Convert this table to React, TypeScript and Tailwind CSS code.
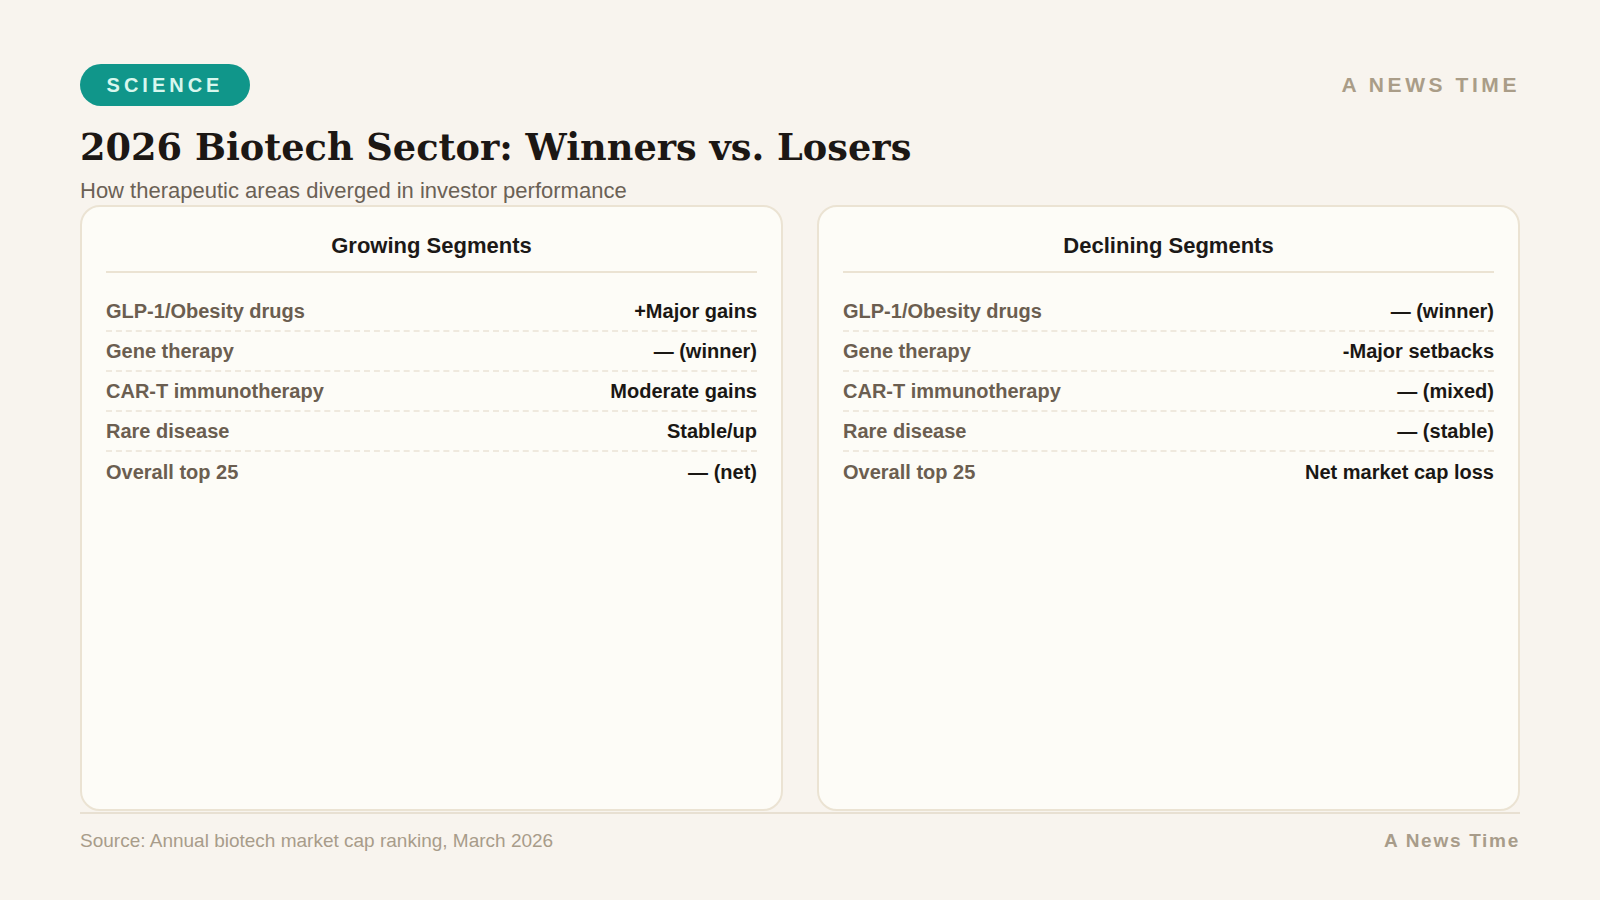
const growing: [string, string][] = [
  ["GLP-1/Obesity drugs", "+Major gains"],
  ["Gene therapy", "— (winner)"],
  ["CAR-T immunotherapy", "Moderate gains"],
  ["Rare disease", "Stable/up"],
  ["Overall top 25", "— (net)"],
];

const declining: [string, string][] = [
  ["GLP-1/Obesity drugs", "— (winner)"],
  ["Gene therapy", "-Major setbacks"],
  ["CAR-T immunotherapy", "— (mixed)"],
  ["Rare disease", "— (stable)"],
  ["Overall top 25", "Net market cap loss"],
];

function SegmentCard({ title, rows }: { title: string; rows: [string, string][] }) {
  return (
    <section className="flex-1 rounded-[20px] border-2 border-[#ebe3d3] bg-[#fdfcf7] px-6 pt-6">
      <h2 className="border-b-2 border-[#ebe3d3] pb-2.5 text-center text-[22px] leading-[30px] font-bold text-[#1c1917]">
        {title}
      </h2>
      <div className="mt-[19px]">
        {rows.map(([label, value], index) => (
          <div
            key={label}
            className={
              index < rows.length - 1
                ? "flex h-10 items-center justify-between border-b-2 border-dashed border-[#efe9de] pb-[1px]"
                : "flex h-10 items-center justify-between pb-[1px]"
            }
          >
            <span className="text-[20px] font-bold text-[#6b5e50]">{label}</span>
            <span className="text-[20px] font-bold text-[#1a1714]">{value}</span>
          </div>
        ))}
      </div>
    </section>
  );
}

export default function App() {
  return (
    <main
      className="flex h-[900px] w-[1600px] flex-col bg-[#f8f4ee] px-20 pt-16"
      style={{ fontFamily: '"Liberation Sans", Arial, sans-serif' }}
    >
      <div className="flex items-center justify-between">
        <div className="flex h-[42px] w-[170px] items-center justify-center rounded-full bg-[#10968a] text-[20px] font-bold tracking-[0.2em] text-[#d8f7ee]">
          SCIENCE
        </div>
        <div className="text-[21px] font-bold tracking-[0.17em] text-[#aa9d88]">A NEWS TIME</div>
      </div>

      <h1
        className="mt-[18px] text-[36.7px] leading-[48px] font-bold text-[#1c1714]"
        style={{ fontFamily: '"DejaVu Serif", Georgia, serif' }}
      >
        2026 Biotech Sector: Winners vs. Losers
      </h1>
      <p className="mt-[6px] text-[22px] leading-[26px] text-[#6b6155]">
        How therapeutic areas diverged in investor performance
      </p>

      <div className="mt-[1px] flex h-[606px] gap-[34px]">
        <SegmentCard title="Growing Segments" rows={growing} />
        <SegmentCard title="Declining Segments" rows={declining} />
      </div>

      <footer className="mt-[1px] flex items-center justify-between border-t-2 border-[#e8e0d2] pt-4">
        <span className="text-[19px] leading-[22px] text-[#a89c8a]">Source: Annual biotech market cap ranking, March 2026</span>
        <span className="text-[19px] leading-[22px] font-bold tracking-[0.09em] text-[#a89c8a]">A News Time</span>
      </footer>
    </main>
  );
}
